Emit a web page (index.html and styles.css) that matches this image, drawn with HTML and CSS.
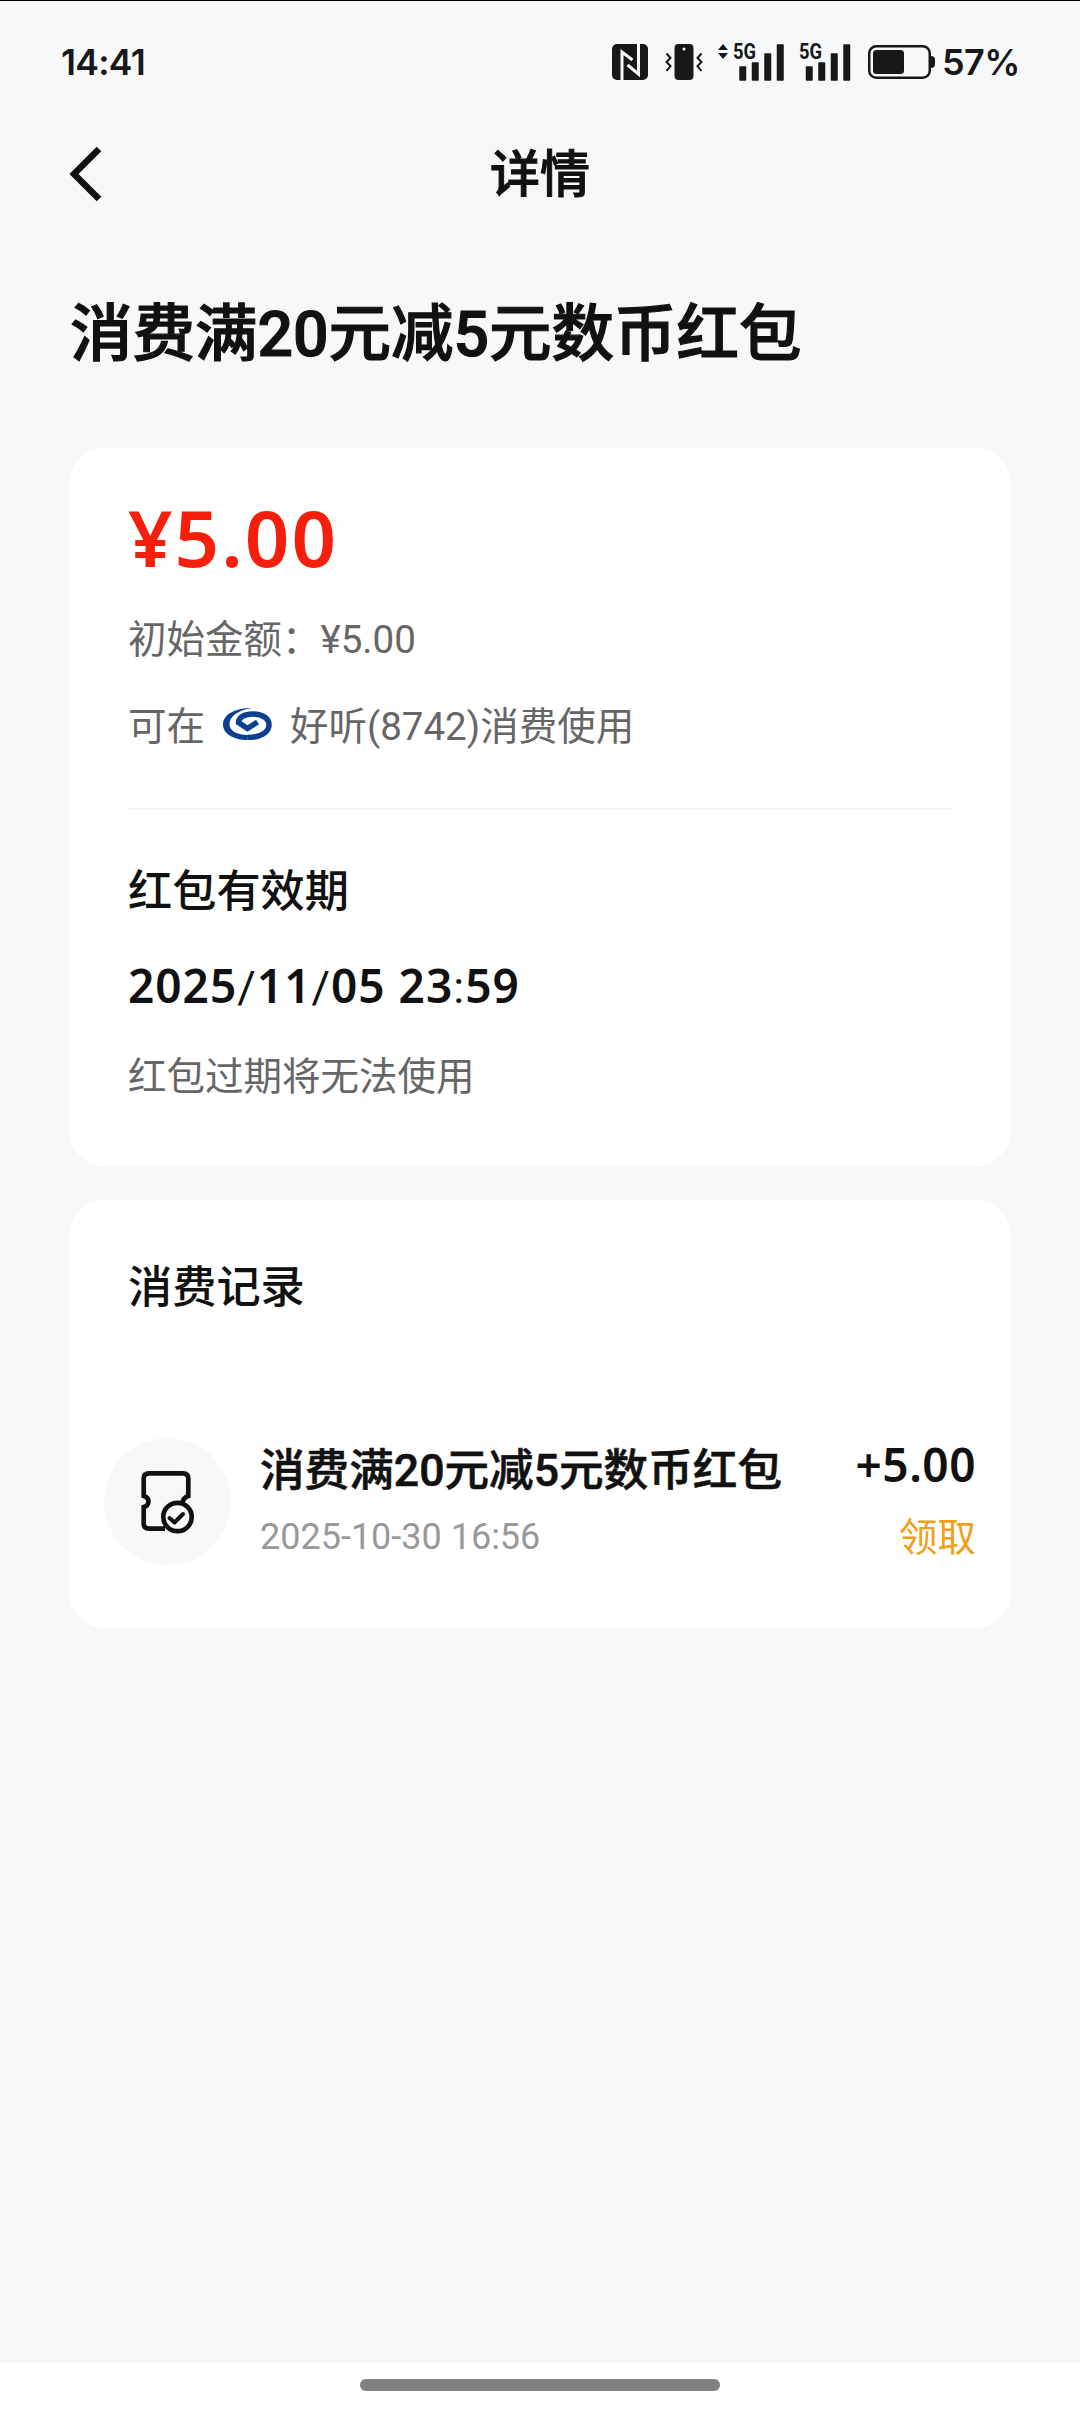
FILE: index.html
```html
<!DOCTYPE html>
<html lang="zh-CN">
<head>
<meta charset="utf-8">
<title>详情</title>
<link rel="stylesheet" href="styles.css">
</head>
<body>
<div class="screen">
  <header class="status">
    <span class="clock">14:41</span>
    <div class="indicators">
      <svg class="nfc" width="36" height="36" viewBox="0 0 36 36"><rect width="36" height="36" rx="5" fill="#17181a"/><path d="M10 36V8L20.500 16M26.500 0V30L15.500 21" fill="none" stroke="#f7f8fa" stroke-width="3"/></svg>
      <svg class="vibrate" width="38" height="36" viewBox="0 0 38 36"><rect x="9.500" width="19" height="36" rx="4" fill="#17181a"/><circle cx="19" cy="5" r="1.500" fill="#f7f8fa"/><path d="M1.500 9.500l4 4.500-4 4 4 4-4 5M36.500 9.500l-4 4.500 4 4-4 4 4 5" fill="none" stroke="#17181a" stroke-width="2"/></svg>
      <svg class="signal-data" width="66" height="44" viewBox="0 -6 66 44"><path d="M0 7l5-6 5 6zM0 10l5 6 5-6z" fill="#17181a"/><text x="15" y="16" textLength="23" lengthAdjust="spacingAndGlyphs">5G</text><path d="M22 24h5.500v13h-5.500zM34.500 20h5.500v17h-5.500zM47 11h5.500v26h-5.500zM59.500 2h5.500v35h-5.500z" class="bars"/></svg>
      <svg class="signal" width="52" height="44" viewBox="0 -6 52 44"><text x="0" y="16" textLength="23" lengthAdjust="spacingAndGlyphs">5G</text><path d="M7.500 24h5.500v13h-5.500zM20 20h5.500v17h-5.500zM32.500 11h5.500v26h-5.500zM45 2h5.500v35h-5.500z" class="bars"/></svg>
      <svg class="battery" width="68" height="34" viewBox="0 0 68 34"><rect x="1.250" y="1.250" width="60.500" height="31.500" rx="7" fill="none" stroke="#17181a" stroke-width="2.500"/><rect x="5" y="5" width="31" height="24" rx="3.500" fill="#17181a"/><path d="M63 11q4 0 4 4v4q0 4-4 4z" fill="#17181a"/></svg>
      <span class="percent">57%</span>
    </div>
  </header>
  <nav class="navbar">
    <svg class="back" width="34" height="56" viewBox="0 0 34 56"><path d="M30 3L5 28L30 53" fill="none" stroke="#111" stroke-width="6.500"/></svg>
    <span class="nav-title">详情</span>
  </nav>
  <main class="content">
    <h1 class="headline">消费满20元减5元数币红包</h1>
    <section class="card summary">
      <div class="amount">¥5.00</div>
      <div class="initial">初始金额：¥5.00</div>
      <div class="usage"><span>可在</span><svg class="bank" width="49" height="32" viewBox="0 0 49 32"><path d="M29 0C11 0 0 7 0 16.500C0 26 11 32 24.500 32L25 27C14 27 6.500 23 6.500 16C6.500 9 14 2.500 29 0Z" fill="#0a3f92"/><path d="M24.500 29.500C37 29.500 46 24.500 46 17C46 10 39 6 30 6C21 6 15.500 9.500 15.500 14.500L24.500 20.500L34.500 14" fill="none" stroke="#0a3f92" stroke-width="5.500"/></svg><span>好听(8742)消费使用</span></div>
      <hr class="divider">
      <h2 class="label">红包有效期</h2>
      <div class="expiry">2025<i>/</i>11<i>/</i>05 23<i>:</i>59</div>
      <div class="note">红包过期将无法使用</div>
    </section>
    <section class="card records">
      <h2 class="label">消费记录</h2>
      <div class="record">
        <div class="badge"><svg width="56" height="66" viewBox="0 0 56 66"><path d="M25 59.700H9Q3.700 59.700 3.700 54.500V38C10 36.500 10 28.500 3.700 27V9.500Q3.700 4.300 9 4.300H43Q48.300 4.300 48.300 9.500V27C44 28.500 42.500 31 42.500 35" fill="none" stroke="#111" stroke-width="4.700"/><circle cx="37.500" cy="48" r="14.200" fill="#f7f8fa" stroke="#111" stroke-width="4.700"/><path d="M29.500 49l5 4.500 8.500-8.500" fill="none" stroke="#111" stroke-width="4" stroke-linecap="round" stroke-linejoin="round"/></svg></div>
        <div class="record-text">
          <div class="record-title">消费满20元减5元数币红包</div>
          <div class="record-date">2025-10-30 16:56</div>
        </div>
        <div class="record-side">
          <div class="record-sum">+5.00</div>
          <div class="record-state">领取</div>
        </div>
      </div>
    </section>
  </main>
  <footer class="gesture"><div class="pill"></div></footer>
</div>
</body>
</html>
```
FILE: styles.css
```css
* { box-sizing: border-box; margin: 0; padding: 0; }
body { background: #f7f8fa; color: #111; font-family: Roboto, "Noto Sans CJK SC", sans-serif; }
.screen { width: 1080px; height: 2412px; border-top: 1px solid #000; display: flex; flex-direction: column; overflow: hidden; }
svg { display: block; flex: none; }

.status { height: 122px; padding: 0 60px 0 61px; display: flex; justify-content: space-between; align-items: center; color: #17181a; font-family: Inter, sans-serif; }
.clock { font-size: 35.5px; font-weight: 600; letter-spacing: -0.7px; }
.indicators { display: flex; align-items: center; }
.vibrate { margin-left: 17px; }
.signal-data { margin: -6px 0 0 15px; }
.signal { margin: -6px 0 0 15px; }
.battery { margin-left: 17px; }
.percent { margin-left: 6px; font-size: 36px; font-weight: 600; letter-spacing: -0.5px; }
.indicators text { font: 700 22px Roboto, sans-serif; fill: #17181a; }
.bars { fill: #17181a; stroke: #17181a; stroke-width: 1.5; stroke-linejoin: round; }

.navbar { height: 102px; padding: 0 69px; display: grid; grid-template-columns: 1fr auto 1fr; align-items: center; }
.nav-title { padding-top: 1px; font-size: 50px; line-height: 70px; font-weight: 500; -webkit-text-stroke: 1px #111; }

.content { flex: 1; padding: 0 69px; }
.headline { padding: 66px 0 0 1px; height: 223px; font-size: 62.5px; line-height: 88px; font-weight: 500; white-space: nowrap; -webkit-text-stroke: 1.2px #111; }
.card { background: #fff; border-radius: 36px; padding: 0 58px 0 59px; white-space: nowrap; }
.summary { height: 718px; padding-top: 40px; }
.amount { height: 100px; line-height: 98px; font-family: "Noto Sans", sans-serif; font-size: 78px; letter-spacing: 2px; font-weight: 600; color: #f71e0b; }
.initial, .usage, .note { font-size: 38.5px; line-height: 60px; color: #666; }
.initial { margin-top: 22px; }
.usage { margin-top: 27px; display: flex; align-items: center; }
.bank { margin: -7px 18px 0 18px; }
.divider { margin-top: 51px; border: 0; border-top: 2px solid #f2f3f4; }
.label { font-size: 44.2px; line-height: 60px; font-weight: 500; }
.summary .label { margin-top: 52px; }
.expiry { margin-top: 33px; font-family: "Noto Sans", sans-serif; font-size: 46px; letter-spacing: 1px; line-height: 60px; font-weight: 600; }
.expiry i { font: 400 45px/60px Roboto, sans-serif; }
.note { margin-top: 29px; }

.records { margin-top: 34px; height: 428px; padding: 58px 35px 0; }
.records .label { padding-left: 24px; }
.record { margin-top: 120px; height: 127px; display: flex; }
.badge { width: 127px; height: 127px; border-radius: 50%; background: #f7f8fa; display: flex; align-items: center; justify-content: center; }
.record-text { margin-left: 29px; flex: 1; }
.record-title { padding-top: 3px; font-size: 44.6px; line-height: 60px; font-weight: 500; -webkit-text-stroke: 0.6px #111; }
.record-date { margin-top: 6px; font-size: 36px; line-height: 60px; color: #999; }
.record-side { text-align: right; }
.record-sum { font-family: "Noto Sans", sans-serif; font-size: 46px; letter-spacing: 0.5px; line-height: 52px; font-weight: 600; }
.record-state { margin-top: 18px; font-size: 38.5px; line-height: 60px; color: #f0a01c; }

.gesture { height: 49px; background: #fff; padding-top: 16px; }
.pill { width: 360px; height: 12px; border-radius: 6px; background: #808080; margin: 0 auto; }
```
